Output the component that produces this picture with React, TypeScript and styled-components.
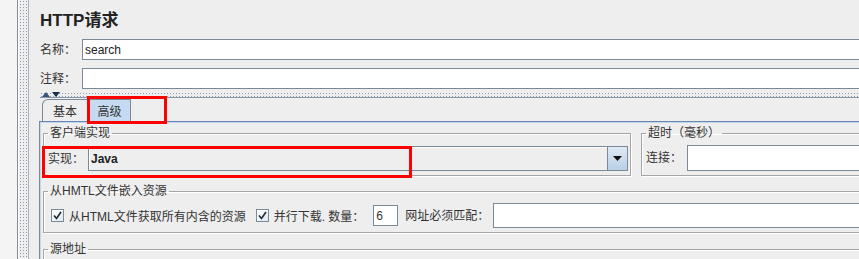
import React from 'react'
import styled, { createGlobalStyle } from 'styled-components'

const GlobalStyle = createGlobalStyle`
    * {
        box-sizing: border-box;
    }
    body {
        margin: 0;
        background: #eeeeee;
        font-family: "Liberation Sans", "Noto Sans CJK SC", sans-serif;
        font-size: 12px;
        color: #333333;
    }
`

const Root = styled.div`
    display: flex;
    width: 859px;
    height: 259px;
    overflow: hidden;
    background: #eeeeee;
`

const SidePane = styled.div`
    flex: none;
    width: 18px;
    background: #f4f4f4;
    border-right: 1px solid #7f8d9b;
`

const Splitter = styled.div`
    flex: none;
    width: 11px;
    background-color: #eeeeee;
    background-image: radial-gradient(#8c9db0 0.7px, transparent 1px);
    background-size: 3px 3px;
    border-left: 1px solid #ffffff;
    border-right: 1px solid #a9b3bd;
`

const Main = styled.div`
    flex: none;
    width: 880px;
    padding-left: 11px;
    display: flex;
    flex-direction: column;
`

const Title = styled.div`
    margin-top: 10px;
    height: 22px;
    line-height: 22px;
    font-size: 17px;
    font-weight: bold;
    color: #222222;
`

const FieldRow = styled.div<{ $top: number }>`
    display: flex;
    align-items: center;
    margin-top: ${props => props.$top}px;
    height: 21px;
`

const Label = styled.div<{ $w: number }>`
    flex: none;
    width: ${props => props.$w}px;
    color: #333333;
    line-height: 14px;
`

const TextBox = styled.div<{ $h?: number }>`
    flex: 1;
    height: ${props => props.$h || 21}px;
    background: #ffffff;
    border: 1px solid #7a8a99;
    padding: 0 2px;
    display: flex;
    align-items: center;
    color: #222222;
`

const SplitBar = styled.div`
    margin-top: 3px;
    height: 8px;
    display: flex;
    align-items: flex-start;
    gap: 2px;
    padding: 0 0 0 2px;
    background-color: #eeeeee;
    background-image: radial-gradient(#8c9db0 0.7px, transparent 1px);
    background-size: 3px 3px;
    border-bottom: 1px solid #8a97a5;
`

const TabArea = styled.div`
    margin-left: -1px;
    display: flex;
    flex-direction: column;
    flex: 1;
`

const Tabs = styled.div`
    display: flex;
    margin-top: 1px;
    padding-left: 3px;
    height: 22px;
`

const Tab = styled.div<{ $active?: boolean; $w: number }>`
    position: relative;
    width: ${props => props.$w}px;
    height: 22px;
    border: 1px solid #7a8a99;
    border-bottom: none;
    border-top-left-radius: ${props => (props.$active ? 0 : 6)}px;
    background: ${props => (props.$active ? '#c6dbf1' : '#eeeeee')};
    display: flex;
    align-items: center;
    justify-content: center;
    color: #333333;
`

const TabPanel = styled.div`
    flex: 1;
    border-top: 1px solid #6a86b5;
    border-left: 1px solid #7a8a99;
    box-shadow: inset 1px 1px 0 #c3d6ec;
    padding: 4px 0 0 3px;
    display: flex;
    flex-direction: column;
`

const TopRow = styled.div`
    display: flex;
`

const Group = styled.fieldset<{ $w?: number; $top?: number }>`
    margin: ${props => props.$top || 0}px 0 0 0;
    ${props => (props.$w ? `width: ${props.$w}px; flex: none;` : 'flex: 1;')}
    border: 1px solid #a6a6a6;
    box-shadow: inset 1px 1px 0 #ffffff, 1px 1px 0 #ffffff;
    padding: 0 2px 4px 4px;
    min-width: 0;
`

const Legend = styled.legend`
    padding: 0 2px;
    line-height: 14px;
    color: #333333;
`

const GroupRow = styled.div<{ $top: number; $left?: number }>`
    position: relative;
    display: flex;
    align-items: center;
    margin-top: ${props => props.$top}px;
    margin-left: ${props => props.$left || 0}px;
    height: 25px;
`

const Combo = styled.div`
    flex: 1;
    display: flex;
    height: 25px;
    border: 1px solid #7a8a99;
    background: #eeeeee;
`

const ComboText = styled.div`
    flex: 1;
    display: flex;
    align-items: center;
    padding-left: 2px;
    font-weight: bold;
    color: #222222;
    box-shadow: inset 1px 1px 0 #ffffff;
`

const ComboArrow = styled.div`
    flex: none;
    width: 20px;
    border-left: 1px solid #7a8a99;
    background: linear-gradient(#dfe9f4, #b9cfe6);
    display: flex;
    align-items: center;
    justify-content: center;
`

const Check = styled.div`
    flex: none;
    width: 13px;
    height: 13px;
    border: 1px solid #7a8a99;
    background: linear-gradient(135deg, #ffffff, #dfe6ee);
    box-shadow: inset 1px 1px 0 #ffffff;
    display: flex;
    align-items: center;
    justify-content: center;
`

const CheckText = styled.div<{ $gap: number }>`
    margin-left: 5px;
    margin-right: ${props => props.$gap}px;
    white-space: nowrap;
`

const SmallBox = styled.div`
    flex: none;
    width: 25px;
    height: 21px;
    background: #ffffff;
    border: 1px solid #7a8a99;
    padding-left: 2px;
    display: flex;
    align-items: center;
    margin-right: 7px;
`

const Highlight = styled.div<{ $l: number; $t: number; $w: number; $h: number }>`
    position: absolute;
    left: ${props => props.$l}px;
    top: ${props => props.$t}px;
    width: ${props => props.$w}px;
    height: ${props => props.$h}px;
    border: 3px solid #ff0000;
    pointer-events: none;
`

const CheckMark = () => (
    <svg width="9" height="9" viewBox="0 0 9 9">
        <path d="M1 4.5 L3.5 7.5 L8 1" fill="none" stroke="#1d2a3c" strokeWidth="1.6" />
    </svg>
)

const App = () => {
    return (
        <Root>
            <GlobalStyle />
            <SidePane />
            <Splitter />
            <Main>
                <Title>HTTP请求</Title>
                <FieldRow $top={7}>
                    <Label $w={42}>名称：</Label>
                    <TextBox>search</TextBox>
                </FieldRow>
                <FieldRow $top={8}>
                    <Label $w={42}>注释：</Label>
                    <TextBox />
                </FieldRow>
                <SplitBar>
                    <svg width="8" height="5" viewBox="0 0 8 5">
                        <path d="M0 5 L4 0 L8 5 Z" fill="#3a5580" />
                    </svg>
                    <svg width="8" height="5" viewBox="0 0 8 5">
                        <path d="M0 0 L8 0 L4 5 Z" fill="#1f2d45" />
                    </svg>
                </SplitBar>
                <TabArea>
                    <Tabs>
                        <Tab $w={46}>基本</Tab>
                        <Tab $w={43} $active>
                            高级
                            <Highlight $l={-2} $t={-4} $w={80} $h={28} />
                        </Tab>
                    </Tabs>
                    <TabPanel>
                        <TopRow>
                            <Group $w={588}>
                                <Legend>客户端实现</Legend>
                                <GroupRow $top={6}>
                                    <Label $w={40}>实现：</Label>
                                    <Combo>
                                        <ComboText>Java</ComboText>
                                        <ComboArrow>
                                            <svg width="9" height="5" viewBox="0 0 9 5">
                                                <path d="M0 0 L9 0 L4.5 5 Z" fill="#111111" />
                                            </svg>
                                        </ComboArrow>
                                    </Combo>
                                    <Highlight $l={-6} $t={0} $w={370} $h={32} />
                                </GroupRow>
                            </Group>
                            <Group style={{ marginLeft: 10 }}>
                                <Legend>超时（毫秒）</Legend>
                                <GroupRow $top={5}>
                                    <Label $w={41}>连接：</Label>
                                    <TextBox $h={26} />
                                </GroupRow>
                            </Group>
                        </TopRow>
                        <Group $top={8}>
                            <Legend>从HMTL文件嵌入资源</Legend>
                            <GroupRow $top={5} $left={3}>
                                <Check><CheckMark /></Check>
                                <CheckText $gap={10}>从HTML文件获取所有内含的资源</CheckText>
                                <Check><CheckMark /></Check>
                                <CheckText $gap={9}>并行下载. 数量：</CheckText>
                                <SmallBox>6</SmallBox>
                                <Label $w={88}>网址必须匹配：</Label>
                                <TextBox $h={25} />
                            </GroupRow>
                        </Group>
                        <Group $top={9}>
                            <Legend>源地址</Legend>
                            <GroupRow $top={5} />
                        </Group>
                    </TabPanel>
                </TabArea>
            </Main>
        </Root>
    )
}

export default App
